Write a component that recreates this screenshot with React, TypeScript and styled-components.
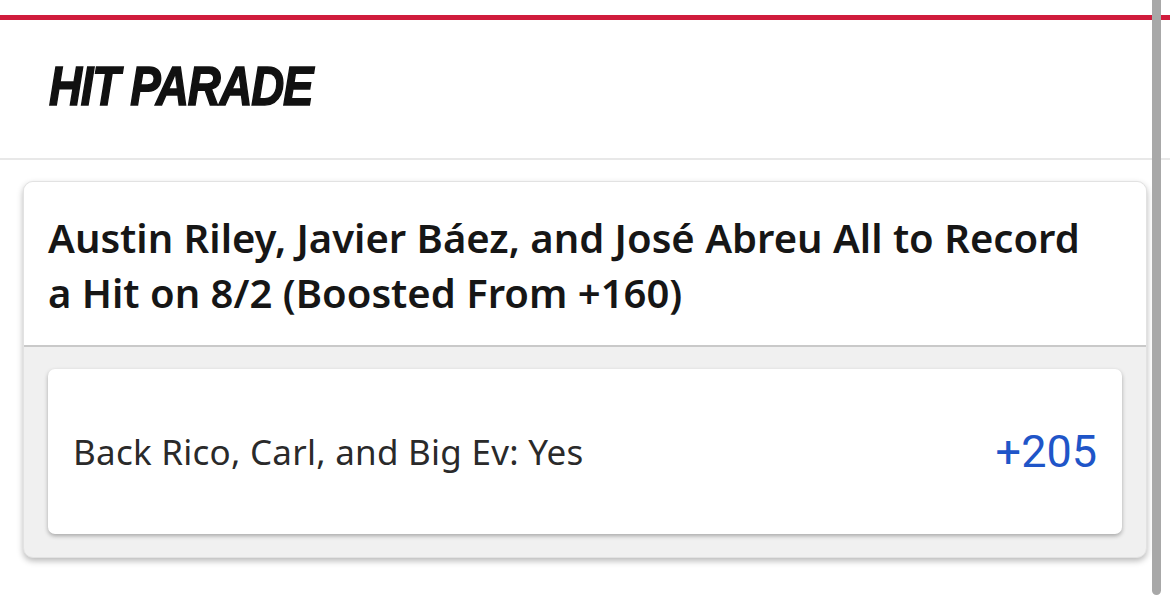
import React from "react";
import styled, { createGlobalStyle } from "styled-components";

const Global = createGlobalStyle`
  html, body { margin: 0; padding: 0; background: #ffffff; }
  body { font-family: "Noto Sans", "Liberation Sans", sans-serif; overflow: hidden; }
  * { box-sizing: border-box; }
`;

const Page = styled.div`
  position: relative;
  width: 1170px;
  height: 605px;
  padding-top: 15px;
  background: #fff;
`;

const TopBar = styled.div`
  height: 5px;
  background: #d01c3c;
`;

const Header = styled.header`
  height: 140px;
  display: flex;
  align-items: center;
  padding-left: 49px;
  padding-bottom: 6px;
  border-bottom: 2px solid #e8e8e8;
`;

const Title = styled.h1`
  margin: 0;
  font-family: "Liberation Sans", Arial, sans-serif;
  font-weight: 700;
  font-style: italic;
  font-size: 55px;
  line-height: 1;
  color: #111;
  letter-spacing: -1.5px;
  -webkit-text-stroke: 1.6px #111;
  transform: scaleX(0.83);
  transform-origin: left center;
  white-space: nowrap;
`;

const Card = styled.section`
  margin: 21px 23px 0 23px;
  border: 1px solid #e2e2e2;
  border-radius: 10px;
  overflow: hidden;
  box-shadow: 0 3px 6px rgba(0, 0, 0, 0.28);
  background: #f0f0f0;
`;

const CardHead = styled.div`
  background: #fff;
  padding: 28px 45px 25px 24px;
  border-bottom: 2px solid #c9c9c9;
`;

const CardTitle = styled.h2`
  margin: 0;
  font-size: 40px;
  font-weight: 600;
  line-height: 55px;
  color: #161616;
  letter-spacing: 0;
`;

const CardBody = styled.div`
  padding: 22px 24px 23px 24px;
`;

const Option = styled.button`
  width: 100%;
  height: 165px;
  display: flex;
  align-items: center;
  justify-content: space-between;
  padding: 0 25px;
  border: none;
  border-radius: 7px;
  background: #fff;
  box-shadow: 0 2px 4px rgba(0, 0, 0, 0.3);
  font-family: inherit;
  cursor: pointer;
`;

const OptionLabel = styled.span`
  font-size: 35px;
  font-weight: 400;
  color: #2a2a2a;
  letter-spacing: 0.25px;
`;

const Odds = styled.span`
  font-family: Roboto, "Noto Sans", sans-serif;
  font-size: 45px;
  font-weight: 400;
  color: #1f55c8;
`;

const Scrollbar = styled.div`
  position: absolute;
  top: 0;
  left: 1152px;
  width: 9px;
  height: 595px;
  background: #a8a8a8;
  border-radius: 0 0 5px 5px;
`;

export default function App() {
  return (
    <Page>
      <Global />
      <TopBar />
      <Header>
        <Title>HIT PARADE</Title>
      </Header>
      <Card>
        <CardHead>
          <CardTitle>
            Austin Riley, Javier Báez, and José Abreu All to Record a Hit on 8/2 (Boosted From +160)
          </CardTitle>
        </CardHead>
        <CardBody>
          <Option>
            <OptionLabel>Back Rico, Carl, and Big Ev: Yes</OptionLabel>
            <Odds>+205</Odds>
          </Option>
        </CardBody>
      </Card>
      <Scrollbar />
    </Page>
  );
}
